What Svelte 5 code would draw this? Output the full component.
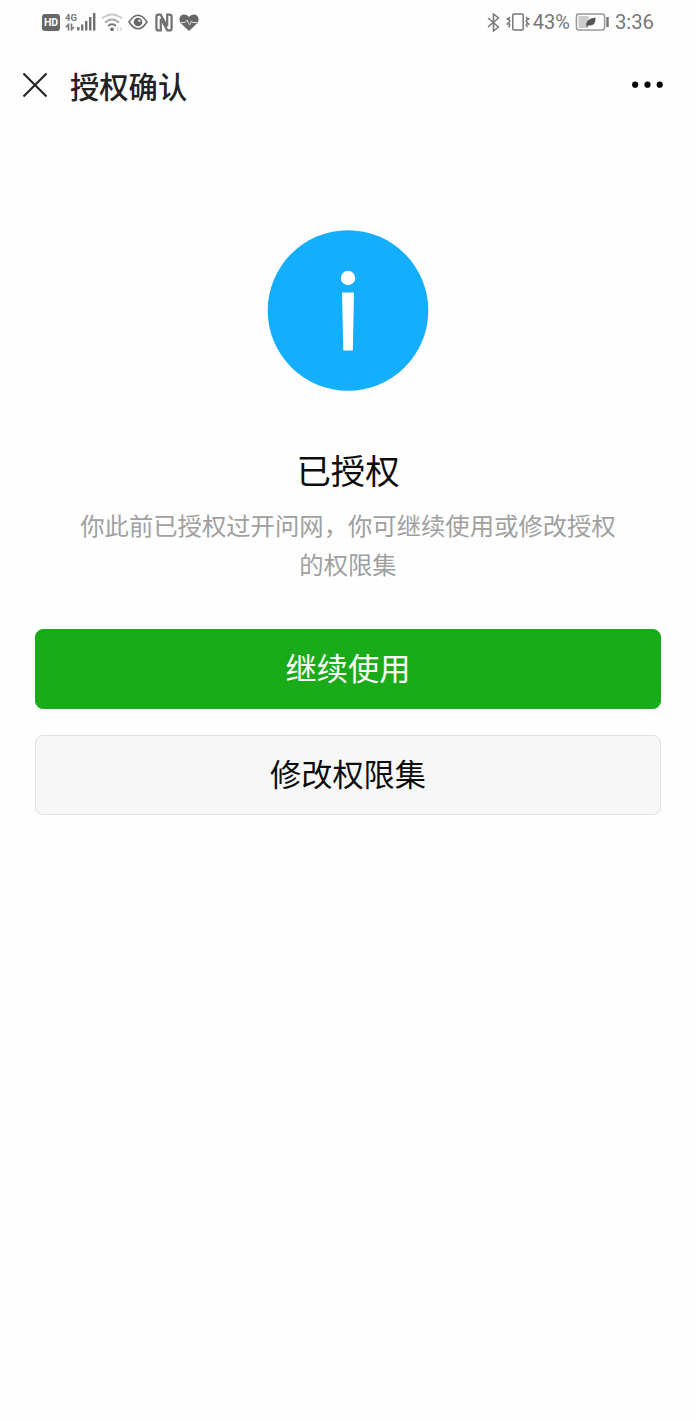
<script>
  const battery = 43;
  const time = '3:36';

  let actions = [
    { label: '继续使用', type: 'primary' },
    { label: '修改权限集', type: 'default' }
  ];
</script>

<div class="page">
  <div class="status">
    <div class="group left">
      <span class="hd">HD</span>
      <div class="signal">
        <div class="net">
          <span>4G</span>
          <svg width="12" height="8" viewBox="0 0 12 8">
            <path d="M3.5 7.5V1.5L.8 4.2M6.5 .5V6.5L9 4" />
          </svg>
        </div>
        <svg class="bars" width="19" height="18" viewBox="0 0 19 18">
          <path d="M1.3 14v3.5M5.2 11.5v6M9.2 8v9.5M13.2 4v13.5M17.2 0v17.5" />
        </svg>
      </div>
      <svg class="wifi" width="22" height="19" viewBox="0 0 22 19">
        <g fill="none" stroke-width="1.8">
          <path d="M1 5.5Q11-2.5 21 5.5" stroke="#c9c9c9" />
          <path d="M4 9.5Q11 3.5 18 9.5" stroke="#aaa" />
          <path d="M7 13Q11 9.5 15 13" stroke="#777" />
        </g>
        <circle cx="11" cy="16.3" r="1.8" fill="#666" />
        <path d="M16.5 14v4M20 14v4" stroke="#d5d5d5" stroke-width="1.3" />
      </svg>
      <svg class="eye" width="20" height="16" viewBox="0 0 20 16">
        <path d="M1 8Q10-5.5 19 8Q10 21.5 1 8Z" fill="none" stroke="#686868" stroke-width="1.5" />
        <circle cx="10" cy="8" r="4.3" fill="#686868" />
        <circle cx="11.3" cy="6.8" r="1.3" fill="#ddd" />
      </svg>
      <svg class="nfc" width="18" height="19" viewBox="0 0 18 19">
        <g fill="none" stroke="#707070" stroke-width="2.2">
          <path d="M5.8 6V17.4H3.4Q1.4 17.4 1.4 15.4V3.6Q1.4 1.6 3.4 1.6H5.6L12.2 13.5" />
          <path d="M12.2 13V1.6H14.6Q16.6 1.6 16.6 3.6V15.4Q16.6 17.4 14.6 17.4H12.4L5.8 5.5" />
        </g>
      </svg>
      <svg class="heart" width="20" height="17" viewBox="0 0 20 17">
        <path d="M10 17L2 9.5C-1 6 .5 .5 5.3 .5Q8.5 .5 10 3Q11.5 .5 14.7 .5C19.5 .5 21 6 18 9.5Z" fill="#686868" />
        <path d="M2 8.5H6L8 6L10.5 11L12.5 7L13.5 8.5H18" fill="none" stroke="#ddd" stroke-width="1" />
      </svg>
    </div>

    <div class="group">
      <svg class="bluetooth" width="13" height="19" viewBox="0 0 13 19">
        <path d="M1 5L11.5 14L6.5 18V1L11.5 5L1 14" />
      </svg>
      <svg class="vibrate" width="24" height="18" viewBox="0 0 24 18">
        <rect x="6.8" y="1" width="10.4" height="16" rx="1" />
        <path d="M3.8 4L2.6 6L3.8 8L2.6 10L3.8 12L2.6 14M1.4 5V7M1.4 10V12M20.2 4L21.4 6L20.2 8L21.4 10L20.2 12L21.4 14M22.6 5V7M22.6 10V12" />
      </svg>
      <span class="percent">{battery}%</span>
      <svg class="battery" width="34" height="18" viewBox="0 0 34 18">
        <rect x="1.4" y="1" width="28.2" height="16" rx="2.5" fill="#fff" stroke="#999" stroke-width="1.5" />
        <rect x="3.5" y="3" width={battery * 0.24} height="12" fill="#ccc" />
        <path d="M11 14Q10 5.5 20.5 4.5Q21 13.5 13 12.5Z" fill="#555" />
        <path d="M32.5 4V14" stroke="#777" stroke-width="2.5" />
      </svg>
      <span class="time">{time}</span>
    </div>
  </div>

  <header>
    <button class="icon-btn" aria-label="关闭">
      <svg width="26" height="26" viewBox="0 0 26 26">
        <path d="M1.5 1.5L24.5 24.5M24.5 1.5L1.5 24.5" stroke="#222" stroke-width="2.1" />
      </svg>
    </button>
    <h1>授权确认</h1>
    <button class="icon-btn" aria-label="更多">
      <svg width="32" height="8" viewBox="0 0 32 8">
        <circle cx="3.2" cy="3.7" r="3.1" />
        <circle cx="15.5" cy="3.7" r="3.1" />
        <circle cx="27.7" cy="3.7" r="3.1" />
      </svg>
    </button>
  </header>

  <main>
    <svg class="info" width="162" height="162" viewBox="0 0 162 162">
      <circle cx="81" cy="80.5" r="80.3" fill="#14aeff" />
      <circle cx="81" cy="48" r="7.2" fill="#fff" />
      <path d="M75 62.5H87L85.8 120.5H76.3Z" fill="#fff" />
    </svg>
    <h2>已授权</h2>
    <p>你此前已授权过开问网，你可继续使用或修改授权的权限集</p>
    <div class="actions">
      {#each actions as action}
        <button class="btn" class:primary={action.type === 'primary'}>{action.label}</button>
      {/each}
    </div>
  </main>
</div>

<style>
  :global(body) {
    background: #fefefe;
  }

  .page {
    min-height: 1421px;
    font-family: "Noto Sans CJK SC", sans-serif;
    color: #0c0c0c;
  }

  button {
    padding: 0;
    font-family: inherit;
    cursor: pointer;
  }

  .status {
    display: flex;
    justify-content: space-between;
    height: 44px;
    padding: 0 42px;
    box-sizing: border-box;
    font-family: Roboto, sans-serif;
    color: #777;
  }

  .group {
    display: flex;
    align-items: center;
  }

  .hd {
    width: 18px;
    height: 17px;
    border-radius: 3px;
    background: #666;
    color: #fff;
    font-size: 10.5px;
    font-weight: 700;
    line-height: 17px;
    text-align: center;
  }

  .signal {
    display: flex;
    margin-left: 5px;
  }

  .net {
    display: flex;
    flex-direction: column;
    width: 12px;
    height: 18px;
    font-size: 9.5px;
    font-weight: 700;
    line-height: 9px;

    & svg {
      flex: none;
      fill: none;
      stroke: #777;
      stroke-width: 1.6;
      margin-top: 1px;
    }
  }

  .bars {
    stroke: #707070;
    stroke-width: 2.4;
  }

  .wifi {
    margin-left: 5px;
  }

  .eye {
    margin-left: 5px;
  }

  .nfc {
    margin-left: 7px;
  }

  .heart {
    margin-left: 6px;
  }

  .bluetooth,
  .vibrate {
    fill: none;
    stroke: #777;
    stroke-width: 1.5;
  }

  .vibrate {
    margin-left: 6px;
  }

  .percent {
    margin-left: 3px;
    font-size: 20px;
  }

  .battery {
    margin-left: 5px;
  }

  .time {
    margin-left: 6px;
    font-size: 20.3px;
  }

  header {
    display: flex;
    align-items: center;
    height: 82px;
    padding: 0 32px 0 22px;
  }

  .icon-btn {
    display: flex;
    border: none;
    background: none;
  }

  h1 {
    flex: 1;
    margin: 0 0 1px 22px;
    font-size: 29.3px;
    font-weight: 500;
    line-height: 40px;
    color: #222;
  }

  main {
    display: flex;
    flex-direction: column;
    align-items: center;
    padding: 104px 35px 0;
  }

  .info {
    margin-right: 1px;
  }

  h2 {
    margin: 52px 0 0;
    font-size: 34.4px;
    font-weight: 400;
    line-height: 50px;
  }

  p {
    width: 540px;
    margin: 12px 0 0;
    font-size: 24.35px;
    line-height: 38.5px;
    text-align: center;
    color: #a0a0a0;
  }

  .actions {
    display: flex;
    flex-direction: column;
    gap: 26px;
    width: 100%;
    margin-top: 46px;
  }

  .btn {
    height: 80px;
    padding-bottom: 4px;
    border: 1.5px solid #e0e0e0;
    border-radius: 8px;
    background: #f7f7f7;
    color: #0c0c0c;
    font-size: 31.2px;
    line-height: 74px;

    &.primary {
      border-color: #1aab19;
      background: #1aab19;
      color: #fff;
    }
  }
</style>
